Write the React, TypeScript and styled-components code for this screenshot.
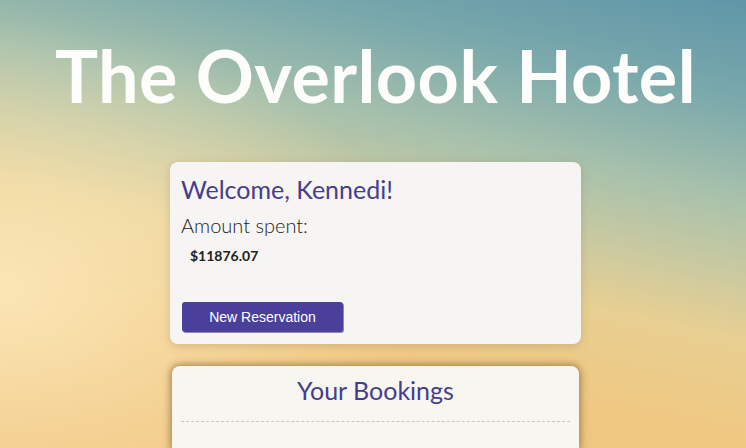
import React from "react";
import styled, { createGlobalStyle } from "styled-components";

const Global = createGlobalStyle`
  html, body { margin: 0; padding: 0; }
  body {
    width: 746px;
    height: 448px;
    overflow: hidden;
    font-family: Lato, "Open Sans", sans-serif;
    background:
      radial-gradient(ellipse 420px 270px at 0px 290px, rgba(255, 240, 200, 0.75), rgba(255, 240, 200, 0.35) 50%, rgba(255, 240, 200, 0) 100%),
      linear-gradient(12deg, #f0c47e 0%, #f0c882 27%, #e8cf92 44%, #cccaa0 54%, #a8c1ac 67%, #7ba9ac 83%, #5f96a8 100%);
  }
`;

const Page = styled.main`
  display: flex;
  flex-direction: column;
  align-items: center;
  padding-left: 5px;
  box-sizing: border-box;
  width: 746px;
  height: 448px;
`;

const Title = styled.h1`
  margin: 25px 0 0;
  font-family: Lato, sans-serif;
  font-weight: 700;
  font-size: 72px;
  line-height: 100px;
  color: #fdfdfb;
  letter-spacing: 0.4px;
`;

const Card = styled.section<{ $w: number; $dark?: boolean }>`
  box-sizing: border-box;
  width: ${(p) => p.$w}px;
  background: ${(p) => (p.$dark ? "#f8f6f1" : "#f6f5f3")};
  border-radius: 8px;
  box-shadow: ${(p) =>
    p.$dark
      ? "0 0 7px 2px rgba(120, 92, 45, 0.6)"
      : "0 2px 8px rgba(150, 130, 90, 0.35)"};
`;

const Welcome = styled(Card)`
  margin-top: 37px;
  display: flex;
  flex-direction: column;
  align-items: flex-start;
  padding: 11px 11px 12px;
  height: 182px;
`;

const Heading = styled.h2`
  margin: 0;
  font-weight: 400;
  font-size: 25px;
  line-height: 32px;
  color: #463e8d;
`;

const Label = styled.p`
  margin: 7px 0 0;
  font-weight: 300;
  font-size: 20px;
  line-height: 26px;
  color: #1e1e1e;
`;

const Amount = styled.p`
  margin: 9px 0 0 9px;
  font-weight: 700;
  font-size: 14px;
  line-height: 18px;
  color: #222;
`;

const Button = styled.button`
  margin: auto 0 0 1px;
  width: 161px;
  height: 30px;
  border: none;
  border-radius: 3px;
  background: #4a3f9b;
  box-shadow: 1px 1px 0 rgba(40, 30, 80, 0.5);
  color: #fff;
  font-family: "Liberation Sans", Arial, sans-serif;
  font-size: 14px;
  cursor: pointer;
`;

const Bookings = styled(Card)`
  margin-top: 22px;
  flex: 1;
  padding: 9px 9px 0;
  border-bottom-left-radius: 0;
  border-bottom-right-radius: 0;
`;

const BookingsTitle = styled.h2`
  margin: 0;
  text-align: center;
  font-weight: 400;
  font-size: 25px;
  line-height: 30px;
  color: #463e8d;
  padding-bottom: 16px;
  border-bottom: 1px dashed #c9c6c0;
`;

export default function App() {
  return (
    <>
      <Global />
      <Page>
        <Title>The Overlook Hotel</Title>
        <Welcome $w={411}>
          <Heading>Welcome, Kennedi!</Heading>
          <Label>Amount spent:</Label>
          <Amount>$11876.07</Amount>
          <Button>New Reservation</Button>
        </Welcome>
        <Bookings $w={407} $dark>
          <BookingsTitle>Your Bookings</BookingsTitle>
        </Bookings>
      </Page>
    </>
  );
}
